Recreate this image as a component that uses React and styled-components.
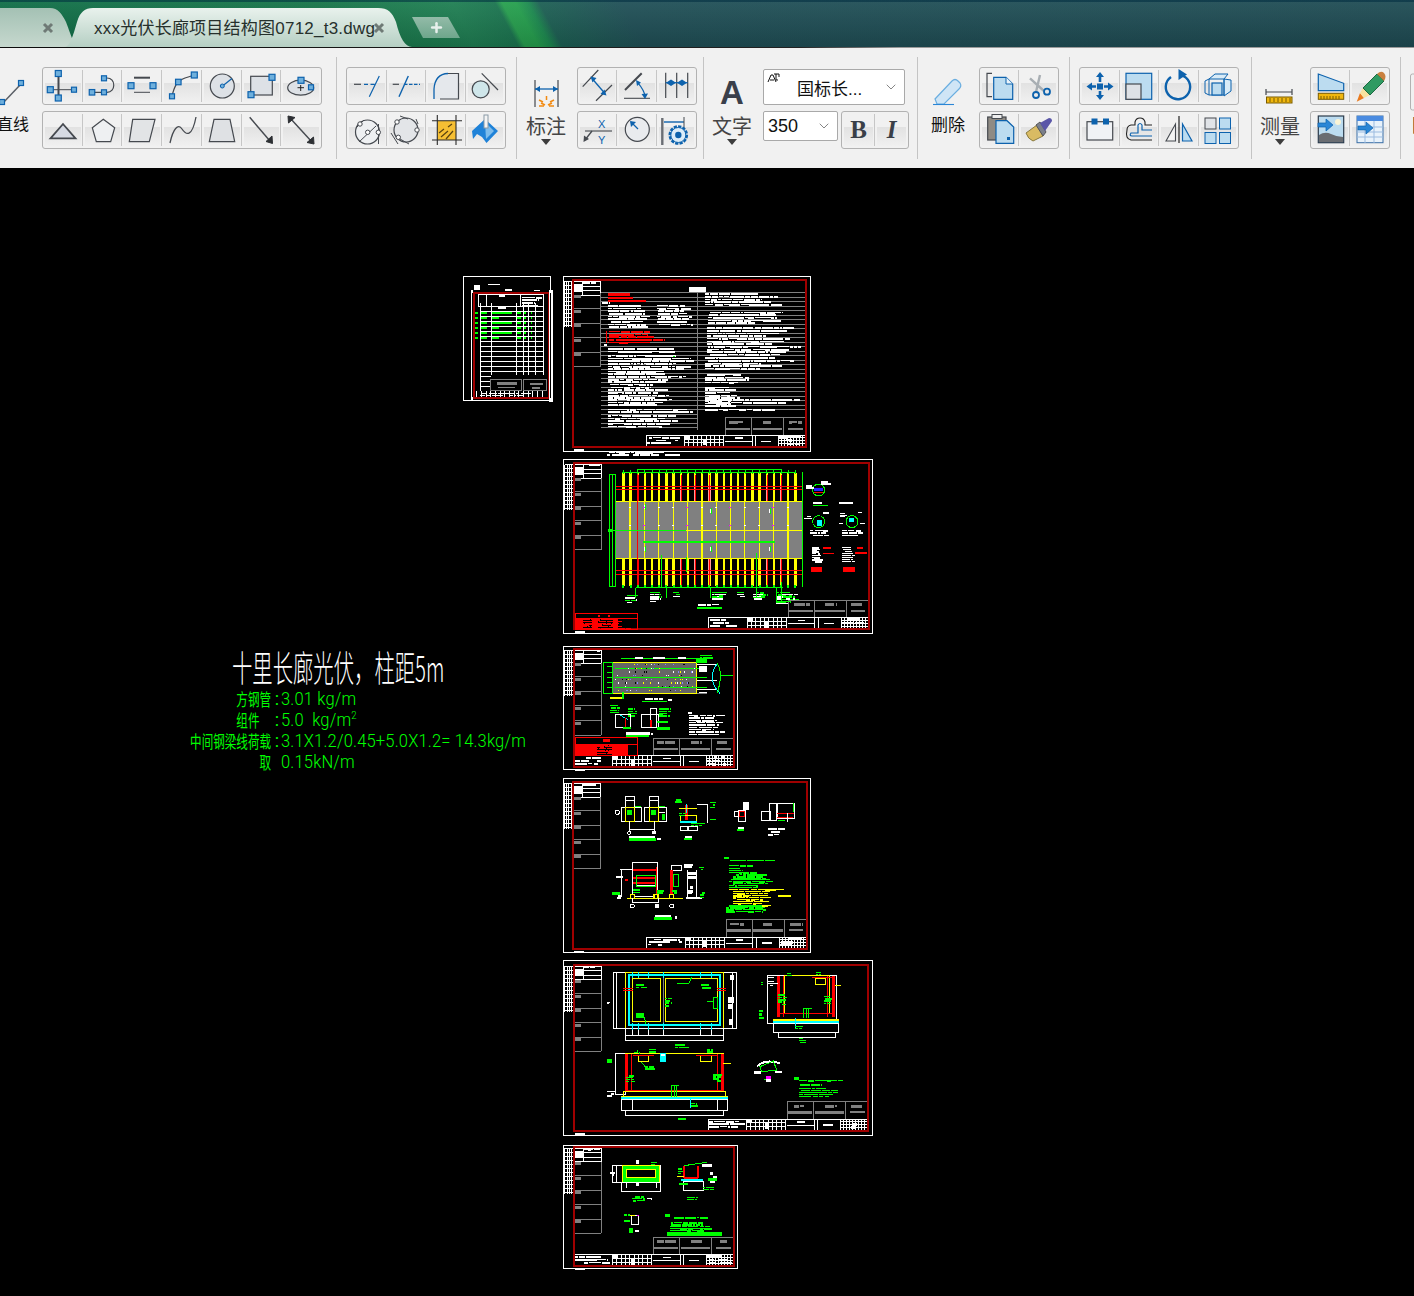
import React from 'react';
import styled, { createGlobalStyle } from 'styled-components';
import { ChevronDown, Plus } from 'lucide-react';

const Global = createGlobalStyle`
  html, body { margin: 0; padding: 0; background: #000; }
  body { font-family: "Noto Sans CJK SC", "Liberation Sans", sans-serif; }
`;
const Page = styled.div`width: 1414px; height: 1296px; overflow: hidden; display: flex; flex-direction: column;`;

/* ---------- tab bar ---------- */
const TabBar = styled.div`
  height: 47px; flex: none; position: relative; display: flex; align-items: flex-end;
  background:
    linear-gradient(180deg, rgba(8,50,70,.55) 0 2px, rgba(255,255,255,.05) 2px, rgba(0,0,0,.14) 100%),
    linear-gradient(62deg, #0f6d47 0, #167548 300px, #1f7f53 420px, #1b7550 458px, #27a04f 464px, #25a04e 476px, #1c8a50 487px, #1d6054 497px, #205057 570px, #1f4c54 100%);
`;
const TabShape = styled.div`
  position: relative; height: 39px; flex: none; box-sizing: border-box;
  width: ${p => p.$w}px; margin-left: ${p => p.$ml || 0}px;
  background: linear-gradient(180deg, ${p => p.$top}, ${p => p.$bottom});
  clip-path: path('${p => p.$shape}');
  font: 17px/42px "Liberation Sans", "Noto Sans CJK SC", sans-serif;
  letter-spacing: .23px; color: #26302c; white-space: nowrap;
  padding-left: ${p => p.$pl || 0}px;
`;
const CloseMark = styled.svg`position: absolute; left: ${p => p.$x}px; top: 14px; width: 12px; height: 12px;`;
const NewTab = styled.div`
  width: 48px; height: 21px; margin: 0 0 9px 0; flex: none; display: flex; align-items: center; justify-content: center; color: #e8f0ec;
  background: linear-gradient(180deg, #93bba8, #6ea68c);
  clip-path: polygon(0 0, 36px 0, 48px 21px, 11px 21px);
`;

/* ---------- ribbon ---------- */
const Ribbon = styled.div`
  flex: none; display: flex; align-items: flex-start; background: #f1f1f1; padding-top: 9px; height: 111px;
  border-top: 1px solid #000; border-image: linear-gradient(90deg, #0c0c0c, #222 800px, #9a9a9a 900px) 1;
`;
const Section = styled.div`
  display: flex; flex: none; height: 102px; box-sizing: border-box; padding: 10px ${p => p.$pr}px 0 ${p => p.$pl}px;
  gap: ${p => p.$gap || 0}px; border-right: ${p => (p.$last ? 0 : '1px solid #c4c4c4')};
  margin-left: ${p => p.$ml || 0}px;
`;
const Stack = styled.div`display: flex; flex-direction: column; gap: 6px; flex: none;`;
const Group = styled.div`
  display: flex; box-sizing: border-box; width: ${p => p.$w}px; height: 38px; padding: 2px 0;
  border: 1px solid #b2b2b2; border-radius: 3px; background: #f1f1f1;
`;
const Cell = styled.div`
  flex: 1 1 0; min-width: 0; box-sizing: border-box; display: flex; align-items: center; justify-content: center; position: relative;
  border: solid transparent; border-width: 0 2px; background-clip: padding-box;
  background-image: linear-gradient(180deg, #f1f1f1 0 40%, #e2e2e2 42%, #f0f0f0 100%);
  &:not(:last-child)::after { content: ""; position: absolute; right: -2px; top: 0; bottom: 0; width: 1px; background: #c6c6c6; }
`;
const IconSvg = styled.svg`width: 40px; height: 38px; flex: none; overflow: visible;`;
const Big = styled.div`display: flex; flex-direction: column; align-items: center; width: ${p => p.$w}px; flex: none;`;
const BigIcon = styled.svg`width: ${p => p.$w}px; height: 40px; flex: none; overflow: visible;`;
const BigLabel = styled.div`
  font-size: ${p => p.$size || 20}px; line-height: 24px; margin-top: ${p => p.$mt || 7}px; color: ${p => p.$color || '#454545'}; white-space: nowrap;
`;
const Caret = styled.div`width: 0; height: 0; margin-top: 1px; border: 5px solid transparent; border-top: 6px solid #3d3d3d; border-bottom: 0;`;
const TextCol = styled.div`display: flex; flex-direction: column; gap: 6px; flex: none; width: 146px; padding-top: 2px;`;
const SelectBox = styled.div`
  box-sizing: border-box; display: flex; align-items: center; position: relative; background: #fff; color: #111;
  width: ${p => p.$w}px; height: ${p => p.$h}px; padding-left: ${p => p.$pl}px; border: 1px solid #a9a9a9; border-radius: 2px;
  font: ${p => p.$size}px "Liberation Sans", "Noto Sans CJK SC", sans-serif;
`;
const SelectChevron = styled(ChevronDown)`position: absolute; right: ${p => p.$r}px; top: 50%; margin-top: -8px; color: #666;`;
const FontGlyph = styled.svg`position: absolute; left: 3px; top: 2px; width: 14px; height: 14px;`;
const Row = styled.div`display: flex; gap: 3px; align-items: flex-start;`;
const StyleLetter = styled.span`
  font: ${p => (p.$italic ? 'italic bold' : 'bold')} 25px "Liberation Serif", serif; color: #3a3f48;
`;

/* ---------- canvas ---------- */
const Canvas = styled.div`flex: 1; background: #000; position: relative;`;
const CadSvg = styled.svg`display: block; width: 1414px; height: 1128px;`;
const BigNote = styled.div`
  position: absolute; left: 232px; top: 474px; color: #fff; white-space: nowrap; transform: scaleX(.565); transform-origin: left top;
  font: 300 36px/48px "Noto Sans CJK SC", sans-serif;
`;
const Notes = styled.div`
  position: absolute; left: 189px; top: 520px; display: grid; grid-template-columns: 82px 10px auto; grid-auto-rows: 21px; align-items: center; color: #0f0;
`;
const NoteLabel = styled.div`
  white-space: pre; text-align: right; font: 400 17px/21px "Noto Sans CJK SC", sans-serif; transform: scaleX(.68); transform-origin: right center; justify-self: end;
`;
const NoteColon = styled.div`font: 400 18px/21px Roboto, sans-serif; text-align: center; padding-left: 2px;`;
const NoteValue = styled.div`
  white-space: pre; font: 300 19px/21px Roboto, "Liberation Sans", sans-serif; letter-spacing: .2px;
  transform: scaleX(.87); transform-origin: left center;
  sup { font-size: 11px; line-height: 0; }
`;

/* ---------- icons ---------- */
const DK = '#45494f', BL = '#0d62ad', LB = '#6fb0dc', FL = '#dde1e6', SK = '#bcdcf0';
const H = ({ x, y, s = 6 }) => <rect x={x - s / 2} y={y - s / 2} width={s} height={s} fill={LB} stroke={BL} strokeWidth="1.2" />;
const O = ({ x, y }) => <circle cx={x} cy={y} r="2.2" fill="#fff" stroke={DK} />;
const ICONS = {
  cross: <><path d="M15.5 7V31" stroke={DK} strokeWidth="2" /><path d="M7 22.7H31" stroke={DK} /><H x={15.3} y={6.5} /><H x={15.3} y={31} /><H x={7.3} y={22.7} /><H x={31} y={22.7} s={5} /></>,
  hook: <><path d="M9 25.3H21M24 11C33 11 33 25.3 24 25.3" fill="none" stroke={DK} strokeWidth="1.2" /><H x={21} y={11.3} s={5} /><H x={9} y={25.3} s={5.5} /><H x={21} y={25.3} s={5} /></>,
  bars: <><path d="M12 10.7H28" stroke={DK} strokeWidth="2" /><path d="M12 25.3H28" stroke={DK} /><H x={9} y={18.7} /><H x={31} y={18.7} /></>,
  arc: <><path d="M10 29C12 21 14 14 23 11S30 9 32 8" fill="none" stroke={DK} strokeWidth="1.2" /><H x={10} y={29.3} s={5} /><H x={16.3} y={15} s={5.5} /><H x={32.3} y={8} /></>,
  radius: <><circle cx="20.3" cy="19" r="12" fill={FL} stroke={DK} strokeWidth="1.2" /><path d="M20.5 19L30 11.5" stroke={BL} strokeWidth="1.2" /><circle cx="20.3" cy="19" r="2" fill={LB} stroke={BL} /></>,
  square: <><rect x="9.7" y="9.3" width="21.6" height="18.7" fill={FL} stroke={DK} strokeWidth="1.2" /><H x={31} y={10.3} /><H x={10} y={27.7} /></>,
  ellipse: <><ellipse cx="19.7" cy="20.7" rx="13" ry="7.5" fill={FL} stroke={DK} strokeWidth="1.2" /><path d="M16.5 20.7H23M19.7 18V24" stroke="#222" /><H x={20} y={13.3} /><H x={30} y={20.3} s={5} /></>,
  tri: <path d="M7.5 27.3L20 13L32.5 27.3Z" fill="#d6dae3" stroke={DK} strokeWidth="1.8" />,
  pent: <path d="M20.3 8.3L31.7 16.7L27.7 30.7H13.3L9.3 16.7Z" fill="#eef0f2" stroke={DK} strokeWidth="1.2" />,
  para: <path d="M10.7 8.3H33L27.3 30.7H7.3Z" fill="#e2e4e6" stroke={DK} strokeWidth="1.2" />,
  spline: <path d="M8 32C11 18 16 12 20 18S30 27 34 6" fill="none" stroke={DK} strokeWidth="1.3" />,
  trap: <path d="M12 8.3H28L32.7 30.7H7.3Z" fill="#dfe1e4" stroke={DK} strokeWidth="1.2" />,
  arrow: <><path d="M8.7 6.3L29 30" stroke={DK} strokeWidth="1.4" /><path d="M31.5 32.5L31 25L25 30.5Z" fill="#2c2f33" stroke="#2c2f33" /></>,
  arrows: <><path d="M9 7L31 31" stroke={DK} strokeWidth="1.4" /><path d="M33 33L32.5 26L26 31.5Z" fill="#2c2f33" stroke="#2c2f33" /><path d="M7 5L7.5 12L14 6.5Z" fill="#2c2f33" stroke="#2c2f33" /></>,
  dash1: <><path d="M7 17.3H14" stroke={DK} strokeWidth="1.2" /><path d="M17 17.3H21M23.5 17.3H27.5M32.3 9L22.3 29.7" stroke={BL} strokeWidth="1.2" /></>,
  dash2: <><path d="M6.7 17.3H13" stroke={DK} strokeWidth="1.2" /><path d="M22.3 9L13 29.7" stroke={BL} strokeWidth="1.4" /><path d="M18 17.3H34" stroke={BL} strokeDasharray="3.5 1.5" strokeWidth="1.2" /></>,
  fillet: <><path d="M7.5 22Q8 7 22 6.5H32.5V32H7.5Z" fill="#e5e8ec" /><path d="M22 6.5H32.5V32H14" fill="none" stroke={DK} strokeWidth="1.2" /><path d="M8 32V22Q9 7 22 6.5" fill="none" stroke={BL} strokeWidth="1.3" /></>,
  tangent: <><circle cx="15.7" cy="22.3" r="8.5" fill="#cfe6ea" stroke={DK} strokeWidth="1.2" /><path d="M16.7 6.3L33 23" stroke={DK} strokeWidth="1.2" /></>,
  c3p: <><circle cx="20.5" cy="21" r="12" fill="#eef0f2" stroke={DK} strokeWidth="1.2" /><path d="M9 17L17 9M12 31L29 15M31.5 13V33" stroke={DK} /><O x={13} y={13} /><O x={20.7} y={21.3} /><O x={31.3} y={21.3} /></>,
  c2p: <><circle cx="20" cy="19" r="12" fill="#e3e5e8" stroke={DK} strokeWidth="1.2" /><path d="M14 5L22 8M30 8L32 13M5 22L12 33M14 28L23 33" stroke={DK} /><O x={11} y={11} /><O x={31} y={19} /><O x={12.3} y={26.3} /></>,
  hatch: <><rect x="11.3" y="9.7" width="18.7" height="19.3" fill="#f6bf33" /><path d="M6 9.7H36M6 29H36M11.3 4V34M30 4V34" stroke="#2b2b2b" strokeWidth="1.1" /><path d="M13 22L18 18M15 26L22 20M20 28L27 20M22 16L26 13" stroke="#5b4310" strokeWidth="1.2" /></>,
  fill: <><path d="M7 20L20 8L33 20L21.5 32L17 26L12 23L8 28Z" fill="#1f82d8" /><path d="M20 11L29 20L21 28Z" fill="#7dbcec" /><rect x="19" y="4" width="4" height="13" fill="#f4f4f4" stroke="#8a9aa6" /></>,
  dimAligned: <><path d="M4.7 19.7L20.3 3M18 33.7L34 18" stroke={DK} strokeWidth="1.2" /><path d="M14.7 12.3L26.3 25.7" stroke={BL} strokeWidth="1.3" /><path d="M12.5 9.5L18.5 11L14.5 15.5ZM28.5 28.5L22.5 27L26.5 22.5Z" fill={BL} /></>,
  dimAngle: <><path d="M8 23L24.7 6.3" stroke={DK} strokeWidth="2" /><path d="M7 31.3H33" stroke={DK} strokeWidth="1.1" /><path d="M21.3 16.3Q27 23 28 29" fill="none" stroke={BL} strokeWidth="1.2" /><path d="M19 13L24 15.5L20 19ZM28 32L24.5 27L31 26.5Z" fill={BL} /></>,
  dimCont: <><path d="M9.7 5.7V31M20.7 5.7V31M31.7 5.7V31" stroke={DK} strokeWidth="1.2" /><path d="M9.7 15.7H31.7" stroke={BL} strokeWidth="1.2" /><path d="M10 15.7L15 12.5V19ZM20 15.7L15 12.5V19ZM21 15.7L26 12.5V19ZM31 15.7L26 12.5V19Z" fill={BL} /></>,
  xy: <><path d="M7 20H34" stroke={DK} strokeWidth="1.1" /><text x="23.7" y="17" textAnchor="middle" fontSize="11" fontFamily="Liberation Sans" fill={BL}>X</text><text x="23.7" y="33" textAnchor="middle" fontSize="11" fontFamily="Liberation Sans" fill={BL}>Y</text><path d="M14 20L7 29" stroke={DK} strokeWidth="1.3" /><path d="M5.5 31L6 24.5L11 28Z" fill={DK} /></>,
  dimRadius: <><circle cx="20.3" cy="18.3" r="12" fill="#e9ebee" stroke={DK} strokeWidth="1.2" /><path d="M21 18L14 11" stroke={BL} strokeWidth="1.3" /><path d="M13 10L19 11L14 16Z" fill={BL} /></>,
  dimGear: <><path d="M6.3 7V34" stroke="#6a6e74" strokeWidth="2.4" /><path d="M8 11H28" stroke={BL} strokeWidth="1.4" /><path d="M28 6V18" stroke={DK} /><circle cx="22.3" cy="24" r="8.5" fill="#cfe6f7" stroke={BL} strokeWidth="2.6" strokeDasharray="3.2 1.2" /><circle cx="22.3" cy="24" r="7.5" fill="#dcedf9" stroke={BL} /><circle cx="22.3" cy="24" r="3.2" fill={BL} /></>,
  copy: <><path d="M12 6.3H7V29.7H12" fill="none" stroke={DK} strokeWidth="1.2" /><path d="M13.7 10.3H26L32.7 17V32.3H13.7Z" fill={SK} stroke={BL} strokeWidth="1.2" /><path d="M26 10.3V17H32.7" fill="#eaf4fb" stroke={BL} /></>,
  cut: <><path d="M11 11.3L25 24M21 8L17 25" stroke="#a8aeb3" strokeWidth="2.4" /><circle cx="17" cy="28" r="3" fill="none" stroke={BL} strokeWidth="1.8" /><circle cx="28" cy="24.7" r="3" fill="none" stroke={BL} strokeWidth="1.8" /></>,
  paste: <><rect x="7.7" y="6" width="18.3" height="23" fill="#8f8b84" stroke={DK} strokeWidth="1.2" /><rect x="12" y="3.5" width="10" height="4" fill="#eee" stroke={DK} /><path d="M16 9.7H27L33.7 16V32.3H16Z" fill={SK} stroke={BL} strokeWidth="1.2" /><rect x="27" y="26" width="3" height="3" fill={BL} /></>,
  brush: <><path d="M7 22L18 14L24 25L14 30Q9 28 7 22Z" fill="#d9bb63" stroke="#8a7a3f" /><path d="M17 14L21 11L27 21L24 25Z" fill="#7b7f8a" stroke="#555" /><path d="M21 12L30 7Q33 7 33 10L26 20Z" fill="#5a56a8" /></>,
  move: <><rect x="17" y="16.5" width="6" height="6" fill={BL} /><path d="M20 5L24 10H21.3V15H18.7V10H16ZM20 33L24 28H21.3V24H18.7V28H16ZM6.5 19.5L12 15.5V18.2H16V20.8H12V23.5ZM33.5 19.5L28 15.5V18.2H24V20.8H28V23.5Z" fill={BL} /></>,
  scale: <><rect x="7" y="6.3" width="25.7" height="26" fill={SK} stroke={BL} strokeWidth="1.2" /><rect x="7" y="17" width="15" height="15.3" fill={FL} stroke={DK} strokeWidth="1.2" /></>,
  rotate: <><path d="M22 8.2A12.2 12.2 0 1 1 12 10" fill="none" stroke={BL} strokeWidth="2.4" /><path d="M19.5 2V13L28 7.5Z" fill={BL} /></>,
  cube: <><path d="M11 12L17 7H30L26 12ZM26 12L33 13V24L26 29Z" fill="#d9ebf7" stroke={BL} /><path d="M7 14L11 12V28L7 26ZM11 28H26V12" fill="none" stroke={BL} /><rect x="14" y="16" width="10" height="12" fill={SK} stroke={BL} strokeWidth="1.2" /></>,
  trim: <><rect x="7" y="10.7" width="25.7" height="18.3" fill="#f0f2f5" stroke={DK} strokeWidth="1.2" /><rect x="11.5" y="7.5" width="6" height="6" fill={BL} /><rect x="23" y="7.5" width="6" height="6" fill={BL} /></>,
  offset: <><path d="M33 14H26V11Q25 7 21 7T16 11V14H12Q8 15 8 19Q6 28 12 29H33" fill="none" stroke="#222" strokeWidth="1.1" /><path d="M33 19H23V14Q21 11 19 14V22H12Q10 25 13 25H33" fill="none" stroke={BL} strokeWidth="1.2" /></>,
  mirror: <><path d="M20 5V32" stroke="#222" strokeWidth="1.2" /><path d="M16.5 13V30H7Z" fill="#f3f3f3" stroke={DK} strokeWidth="1.1" /><path d="M23.5 13V30H33Z" fill={SK} stroke={BL} strokeWidth="1.2" /></>,
  array: <><rect x="7" y="7" width="11" height="11" fill="#e0e3e7" stroke={DK} /><rect x="21.5" y="7" width="11" height="11" fill={SK} stroke={BL} /><rect x="7" y="21.5" width="11" height="11" fill={SK} stroke={BL} /><rect x="21.5" y="21.5" width="11" height="11" fill={SK} stroke={BL} /></>,
  slope: <><path d="M7.3 7L32.7 16.3V23.7H7.3Z" fill={SK} stroke={BL} strokeWidth="1.2" /><rect x="7.3" y="26.3" width="25.4" height="6" fill="#f1b70e" stroke="#7a5c00" /><path d="M10 29V32M13 29V32M16 29V32M19 29V32M22 29V32M25 29V32M28 29V32" stroke="#7a5c00" /></>,
  pencil: <><path d="M6.7 34.7L10 26L14 31Z" fill="#e97a1e" /><path d="M10 26L13 21L20 28L14 31Z" fill="#f7e2a0" /><path d="M13 21L27 7L34 14L20 28Z" fill="#2f9a62" stroke="#1c6a41" /><path d="M27 7Q31 3 34 6T34 14Z" fill="#c9803f" /></>,
  image: <><rect x="7.3" y="5" width="25.4" height="26.7" fill={SK} stroke="#2b3a4a" strokeWidth="1.2" /><path d="M8 31V24Q14 20 20 23T32 26V31Z" fill="#6a6d72" /><circle cx="27" cy="11" r="3" fill="#fbf4d5" /><path d="M7 12H15V8L22 14L15 20V16H7Z" fill="#2a86d6" stroke={BL} strokeWidth=".7" /></>,
  table: <><rect x="7" y="5" width="26" height="26.7" fill="#e8f2fb" stroke="#3a6ea5" /><rect x="7" y="5" width="26" height="5" fill="#4a8be0" /><path d="M7 16H33M7 21H33M7 26H33M15 10V32M24 10V32" stroke="#9bbbe0" /><path d="M8 15H16V11L23 17L16 23V19H8Z" fill="#2a86d6" stroke={BL} strokeWidth=".7" /></>,
};
const Btn = ({ k }) => <Cell><IconSvg viewBox="0 0 40 38" fill="none">{ICONS[k]}</IconSvg></Cell>;
const BtnGroup = ({ w, items }) => <Group $w={w}>{items.map(k => <Btn key={k} k={k} />)}</Group>;

/* ---------- CAD generator ---------- */
const rng = seed => { let s = seed * 9301 + 49297; return () => (s = (s * 9301 + 49297) % 233280) / 233280; };
const W = '#fff', G = '#0f0', Y = '#ff0', R = '#f00', D = '#a00000', C = '#0ff', A = '#808080', P = '#ff9a9a';
const L = (c, x1, y1, x2, y2, w = 3) => ({ t: 'l', c, x1, y1, x2, y2, w });
const RO = (c, x1, y1, x2, y2, w = 3) => ({ t: 'o', c, x1, y1, x2, y2, w });
const RF = (c, x1, y1, x2, y2) => ({ t: 'f', c, x1, y1, x2, y2 });
const CI = (c, x, y, r, w = 3) => ({ t: 'c', c, x, y, r, w });
let seedCounter = 1;
const N = (c, x, y, w, h, rowH = 12, dens = .85) => {
  const r = rng(seedCounter++); let d = '';
  for (let yy = y; yy < y + h; yy += rowH) {
    const rowEnd = x + w * (.6 + r() * .4);
    let xx = x + (r() < .2 ? r() * 12 : 0);
    while (xx < rowEnd) {
      const len = 6 + r() * 30;
      if (r() < dens) { const bh = Math.round(rowH * (.5 + r() * .3)); d += `M${Math.round(xx)} ${yy}h${Math.round(Math.min(len, rowEnd - xx))}v${bh}h-${Math.round(Math.min(len, rowEnd - xx))}z`; }
      xx += len + r() * 4;
    }
  }
  return { t: 'p', c, d };
};
const frame = (ox1, oy1, ox2, oy2, rx1, ry1, rx2, ry2) => {
  const out = [RO(W, ox1, oy1, ox2, oy2)];
  const sx = rx1 - 28;
  for (let x = sx; x <= rx1; x += 7) out.push(L(W, x, ry1 + 4, x, ry1 + 141, 3));
  for (let y = ry1 + 4; y <= ry1 + 141; y += 12) out.push(L(W, sx, y, rx1, y, 3));
  out.push(RO(W, rx1, ry1 + 4, rx1 + 82, ry1 + 44));
  out.push(L(W, rx1 + 28, ry1 + 17, rx1 + 82, ry1 + 17), L(W, rx1 + 28, ry1 + 30, rx1 + 82, ry1 + 30), L(W, rx1 + 28, ry1 + 4, rx1 + 28, ry1 + 44));
  out.push(RF(W, rx1 + 3, ry1 + 12, rx1 + 27, ry1 + 34), N(W, rx1 + 30, ry1 + 5, 50, 8, 8));
  [84, 129, 171, 216, 259].forEach(dy => {
    out.push(L(A, rx1, ry1 + dy, rx1 + 82, ry1 + dy), RF(A, rx1 + 2, ry1 + dy - 40, rx1 + 22, ry1 + dy - 31));
  });
  out.push(L(A, rx1 + 82, ry1 + 44, rx1 + 82, ry1 + 259), L(A, rx1, ry1 + 44, rx1, ry1 + 259));
  const tx = rx2 - 480, ty = ry2 - 35;
  out.push(RO(A, rx2 - 242, ry2 - 88, rx2, ty), L(A, rx2 - 164, ry2 - 88, rx2 - 164, ty), L(A, rx2 - 68, ry2 - 88, rx2 - 68, ty));
  out.push(N(A, rx2 - 230, ry2 - 78, 60, 12, 12, 1), N(A, rx2 - 130, ry2 - 78, 40, 12, 12, 1), N(A, rx2 - 52, ry2 - 78, 42, 12, 12, 1));
  out.push(RF(A, rx2 - 240, ry2 - 58, rx2 - 168, ry2 - 51), RF(A, rx2 - 160, ry2 - 58, rx2 - 72, ry2 - 51), RF(A, rx2 - 54, ry2 - 58, rx2 - 10, ry2 - 52));
  out.push(RO(W, tx, ty, rx2, ry2), N(W, tx + 4, ty + 5, 110, 24, 8));
  for (let x = tx + 115; x < tx + 235; x += 13) out.push(L(W, x, ty, x, ry2, 3));
  out.push(L(W, tx + 115, ty + 11, tx + 235, ty + 11, 3), L(W, tx + 115, ty + 22, tx + 235, ty + 22, 3));
  out.push(RF(W, tx + 118, ty + 2, tx + 132, ty + 10), RF(W, tx + 170, ty + 12, tx + 182, ty + 30));
  out.push(L(W, tx + 238, ty + 18, tx + 318, ty + 18), L(W, tx + 318, ty, tx + 318, ry2), L(W, tx + 328, ty, tx + 328, ry2), RF(W, tx + 268, ty + 6, tx + 290, ty + 11), RF(W, tx + 345, ty + 16, tx + 375, ty + 20));
  for (let x = rx2 - 82; x < rx2; x += 9) out.push(L(W, x, ty, x, ry2, 3));
  for (let y = ty + 7; y < ry2; y += 9) out.push(L(W, rx2 - 82, y, rx2, y, 3));
  out.push(N(W, rx2 - 80, ty + 2, 78, 30, 10, .5));
  out.push(RO(D, rx1, ry1, rx2, ry2, 6));
  out.push(RF(W, rx1 + 2, ry2 + 6, rx1 + 32, ry2 + 12));
  return out;
};

const sheet0 = () => {
  const o = [RO(W, 10, 19, 272, 391, 3)];
  for (let y = 110; y <= 360; y += 15) o.push(L(W, 60, y, 252, y, 3));
  [60, 95, 170, 190, 205, 225, 250].forEach(x => o.push(L(W, x, 100, x, 362, 3)));
  o.push(RO(W, 55, 72, 250, 110), L(W, 80, 72, 80, 110), L(W, 180, 72, 180, 110));
  o.push(N(W, 85, 42, 45, 8, 8, 1), RF(W, 42, 46, 60, 60), N(W, 132, 58, 30, 8, 8), N(W, 222, 60, 32, 6, 6), N(W, 118, 76, 28, 8, 8, 1), N(W, 185, 80, 62, 28, 8, 1), N(W, 115, 112, 25, 6, 6, 1));
  for (let y = 125; y <= 205; y += 15) {
    o.push(RF(G, 46, y, 54, y + 6), RF(G, 64, y, 82, y + 6), RF(G, 97, y, y % 2 ? 155 : 118, y + 7), RF(G, 172, y, 184, y + 6), RF(G, 192, y, 198, y + 6), RF(G, 212, y, 216, y + 6));
  }
  o.push(RF('#000', 92, 315, 262, 362), RO(A, 92, 328, 185, 360), RO(A, 190, 328, 260, 360), RF(A, 110, 335, 170, 345), RF(A, 115, 350, 165, 355), RF(A, 210, 338, 250, 345), RF(A, 215, 350, 240, 356));
  o.push(RO(D, 42, 70, 267, 385, 6));
  o.push(RF(W, 32, 60, 40, 390), RF('#000', 36, 70, 39, 380), RF(W, 268, 60, 278, 395), RF('#000', 270, 70, 274, 385));
  for (let x = 50; x < 260; x += 14) o.push(L(W, x, 364, x, 382, 3));
  o.push(N(W, 60, 368, 190, 12, 6, .6));
  return o;
};
const sheet1 = () => {
  const o = frame(310, 19, 1052, 545, 340, 31, 1038, 531);
  for (let y = 68; y < 480; y += 13.5) o.push(L(A, 422, y, 713, y, 3));
  for (let y = 68; y < 427; y += 13.5) o.push(L(A, 713, y, 1035, y, 3));
  o.push(L(A, 422, 68, 422, 290), L(A, 713, 68, 713, 480));
  [[445, 105, 130, 65], [590, 105, 120, 60], [735, 70, 250, 40], [745, 125, 230, 40], [740, 172, 290, 95], [445, 235, 240, 14], [445, 255, 265, 52], [445, 310, 240, 30], [445, 342, 210, 42], [445, 387, 200, 20], [445, 416, 260, 10], [445, 435, 240, 34], [735, 262, 270, 40], [735, 312, 150, 28], [735, 350, 110, 60], [735, 388, 290, 12], [735, 416, 230, 8], [425, 97, 30, 6], [425, 222, 20, 8]].forEach(b => o.push(N(W, ...b, 8, 1)));
  o.push(RF(R, 445, 70, 510, 77), RF(R, 445, 81, 520, 88), RF(R, 445, 91, 558, 97), N(R, 448, 183, 170, 36, 8, 1), RF(R, 438, 184, 441, 218));
  o.push(RF(W, 688, 51, 738, 65), N(W, 440, 546, 265, 14, 7, .9), RF(G, 640, 258, 645, 262));
  return o;
};
const sheet2 = () => {
  const o = frame(310, 568, 1238, 1090, 342, 580, 1226, 1078);
  o.push(RF(A, 465, 695, 1027, 865));
  for (let i = 0; i < 13; i++) { const x = 510 + i * 43; o.push(L(Y, x, 695, x, 865, [0, 5, 11].includes(i) ? 6 : 3)); }
  for (let i = 0; i < 25; i++) {
    const x = 490 + i * 21.5; const pink = [2, 8, 10, 12, 20, 22].includes(i);
    o.push(L(Y, x, 610, x, 695, 7), L(Y, x, 865, x, 948, 7));
    if (pink) o.push(L(P, x, 645, x, 695, 7), L(P, x, 865, x, 915, 7), L(R, x + 1, 615, x + 1, 695, 3), L(R, x + 1, 865, x + 1, 945, 3));
  }
  [695, 780, 865].forEach(y => o.push(L(Y, 465, y, 1027, y, 3)));
  [648, 658].forEach(y => o.push(L(R, 468, y, 1027, y, 3)));
  [902, 914].forEach(y => o.push(L(R, 468, y, 1027, y, 3)));
  o.push(L(G, 487, 607, 1008, 607, 3), L(G, 532, 598, 965, 598, 3), L(G, 527, 953, 970, 953, 4), L(G, 1027, 607, 1027, 950, 3), L(G, 550, 817, 945, 817, 6), L(R, 532, 610, 532, 945, 3));
  o.push(RO(G, 448, 612, 465, 948), L(G, 457, 612, 457, 948), L(G, 445, 780, 678, 780, 3), RF(G, 445, 776, 460, 786));
  for (let i = 0; i < 25; i++) { const x = 490 + i * 21.5; o.push(L(G, x, 600, x, 612), RF(G, x - 3, 945, x + 3, 953)); }
  [[557, 712], [557, 838], [755, 722], [755, 838], [932, 722], [932, 838]].forEach(([x, y]) => o.push(L(G, x, y - 9, x, y + 9, 4), L(W, x - 5, y - 6, x - 5, y + 6, 3)));
  for (let i = 0; i < 12; i++) { const x = 510 + i * 43; [712, 764].forEach(y => o.push(RF(i % 3 === 1 ? '#f0f' : W, x - 3, y, x + 3, y + 3))); }
  [[495, 975, 40, 18], [570, 965, 35, 22], [640, 965, 24, 8], [755, 965, 45, 18], [832, 965, 24, 8], [880, 965, 45, 18], [948, 965, 70, 32]].forEach(b => o.push(N(G, ...b, 7, 1), N(W, b[0], b[1] + 6, b[2], b[3], 7, .6)));
  [[527, 955, 527, 985], [618, 955, 618, 985], [680, 905, 680, 860], [605, 955, 605, 855], [889, 850, 889, 985], [750, 955, 750, 985], [965, 935, 965, 995], [948, 955, 948, 995]].forEach(a => o.push(L(G, ...a, 3)));
  o.push(N(W, 715, 1002, 70, 7, 7, 1), RF(G, 712, 1012, 785, 1016), N(W, 788, 1007, 12, 5, 5, 1));
  [[1076, 660, 18], [1076, 755, 18], [1176, 755, 18]].forEach(([x, y, r]) => o.push(CI(G, x, y, r)));
  o.push(RF('#22f', 1062, 655, 1090, 663), RF(R, 1063, 665, 1088, 668), RF(C, 1070, 750, 1085, 768), RF(C, 1168, 745, 1183, 755));
  o.push(N(W, 1082, 634, 30, 8, 6, 1), N(W, 1038, 646, 28, 8, 6, 1), N(W, 1060, 696, 45, 8, 8, 1), N(W, 1138, 696, 42, 8, 8, 1), RF(G, 1060, 704, 1105, 707));
  o.push(N(W, 1032, 738, 25, 8, 6, 1), N(W, 1090, 727, 20, 6, 6, 1), N(W, 1140, 730, 25, 8, 6, 1), N(W, 1195, 727, 15, 6, 6, 1), N(W, 1138, 758, 20, 6, 6, 1), N(W, 1190, 758, 25, 6, 6, 1), N(W, 1050, 780, 60, 15, 7, 1), N(W, 1145, 780, 70, 15, 7, 1));
  o.push(N(W, 1055, 832, 35, 48, 6, 1), N(W, 1145, 830, 40, 48, 6, 1), RF(R, 1090, 830, 1112, 836), RF(R, 1090, 848, 1122, 852), RF(R, 1190, 830, 1210, 836), RF(R, 1185, 846, 1222, 852), RF(R, 1052, 892, 1086, 905), RF(R, 1150, 892, 1185, 905));
  o.push(RO(R, 345, 1030, 533, 1078), L(R, 345, 1046, 533, 1046));
  o.push(N(R, 348, 1048, 180, 28, 5, 1), RF(R, 345, 1048, 368, 1076), RF(R, 395, 1048, 415, 1076), RF(R, 458, 1048, 475, 1076), RF(R, 415, 1035, 420, 1042), RF(R, 445, 1035, 450, 1042));
  return o;
};
const sheet3 = () => {
  const o = frame(10, 19, 533, 388, 42, 26, 522, 382);
  o.push(RF('#666', 160, 68, 410, 160), RO(Y, 157, 67, 410, 160, 3), RO(G, 130, 67, 157, 160));
  [80, 98, 112, 128, 142].forEach(y => { o.push(L(G, 142, y, 157, y)); });
  [84, 112, 142].forEach(y => o.push(L(G, 165, y, 440, y, 3)));
  const r = rng(5);
  for (let i = 0; i < 90; i++) { const x = 165 + r() * 240, y = 72 + Math.floor(r() * 8) * 11; o.push(RF([W, Y, '#000', '#88f'][i % 4], x, y, x + 3, y + 4)); }
  o.push(L(G, 182, 55, 408, 55, 3), N(W, 200, 52, 190, 8, 8, .6), RF(G, 408, 55, 440, 68), N(G, 420, 46, 40, 10, 6, 1), RF(Y, 150, 170, 190, 176), RF(G, 187, 156, 192, 176));
  o.push(N(W, 245, 175, 75, 8, 8, 1), L(G, 245, 185, 320, 185), RF(W, 325, 177, 335, 183));
  [[72, 97], [120, 128], [148, 160]].forEach(([a, b]) => o.push(L(W, 410, a, 470, a, 3), RF(W, 417, a + 8, 440, b - 2)));
  o.push(RF(W, 417, 78, 440, 90), { t: 'a', c: C, d: 'M475 68C450 95 450 130 480 160', w: 3 }, { t: 'a', c: G, d: 'M470 68C490 95 480 130 472 160', w: 3 }, L(G, 480, 106, 520, 106, 4), RF(A, 410, 158, 440, 161));
  o.push(N(G, 150, 195, 30, 22, 7, 1), N(G, 203, 205, 30, 24, 7, 1), RO(W, 165, 222, 212, 263), L(C, 180, 225, 205, 240), L(R, 195, 235, 195, 265, 3), N(G, 190, 262, 35, 8, 8, 1));
  o.push(RO(W, 243, 222, 295, 263), RO(W, 270, 205, 288, 263), L(R, 272, 240, 272, 262, 5), N(G, 298, 205, 35, 22, 7, 1), RF(G, 290, 242, 325, 250), RF(G, 290, 262, 330, 270));
  o.push(RF(W, 198, 276, 270, 284), RF(G, 198, 284, 268, 290), RF(W, 272, 280, 280, 286));
  o.push(N(W, 388, 225, 118, 60, 7, 1), RF(W, 385, 216, 395, 222));
  o.push(RO(R, 45, 292, 232, 347), L(R, 45, 312, 232, 312), N(R, 48, 314, 182, 32, 5, 1), RF(R, 45, 314, 110, 347), RF(R, 155, 314, 205, 347), RF(R, 130, 297, 150, 305));
  return o;
};
const sheet4 = () => {
  const o = frame(10, 415, 752, 938, 40, 427, 740, 926);
  [[183, 195, 222], [253, 267, 296]].forEach(([a, b, c]) => {
    o.push(RO(W, a, 502, c + 22, 543), RO(W, b, 470, c + 0, 543), RO(Y, b, 502, c, 543), RF(G, b + 7, 510, b + 21, 525), L(W, b, 480, c, 480));
  });
  o.push(L(W, 208, 543, 208, 575), L(W, 282, 543, 282, 575), L(W, 208, 568, 282, 568), CI(W, 208, 578, 5), RF(W, 277, 573, 287, 583), CI(W, 172, 517, 6), N(G, 226, 497, 22, 6, 6, 1), N(G, 298, 497, 22, 6, 6, 1), RF(G, 306, 522, 314, 540), L(W, 296, 517, 316, 517));
  o.push(RF(W, 208, 588, 285, 595), RF(G, 207, 595, 288, 603), RF(W, 290, 595, 302, 600));
  o.push(N(G, 345, 477, 30, 14, 7, 1), RO(W, 360, 558, 413, 572), L(W, 412, 492, 445, 492), L(W, 443, 492, 443, 550), L(R, 380, 495, 380, 540, 8), L(C, 380, 492, 380, 520, 4), RO(Y, 362, 526, 408, 543), L(Y, 358, 505, 410, 505, 3), RF(C, 360, 544, 410, 550), N(G, 450, 486, 18, 18, 7, 1), N(G, 450, 536, 18, 6, 6, 1), N(G, 392, 548, 50, 12, 6, 1), N(G, 358, 518, 25, 8, 6, 1), RF(W, 380, 558, 386, 572));
  o.push(RF(G, 372, 595, 395, 600), N(W, 372, 588, 36, 8, 8, 1));
  o.push(RO(W, 522, 515, 537, 530), RO(W, 535, 510, 555, 543), RO(R, 538, 515, 553, 530), RF(W, 549, 487, 567, 510), RF(G, 531, 567, 552, 572), N(W, 533, 562, 34, 6, 6, 1));
  o.push(RO(W, 603, 515, 630, 540), RO(W, 628, 490, 648, 540), RO(W, 651, 490, 702, 535), L(G, 700, 490, 700, 515), L(R, 652, 520, 702, 520, 3), L(R, 652, 532, 700, 532, 3), L(W, 682, 520, 682, 545), N(W, 625, 565, 50, 24, 8, 1), RF(G, 655, 540, 675, 544));
  o.push(RO(W, 217, 667, 293, 770), L(W, 180, 688, 217, 688), L(W, 183, 688, 183, 770), RF(R, 220, 688, 288, 694), RF(R, 220, 712, 288, 718), RF(R, 220, 726, 288, 732), L(R, 290, 680, 290, 770, 3), RO(G, 228, 705, 285, 740), RF(W, 230, 735, 285, 738), RF(W, 168, 708, 190, 714), RF(G, 156, 756, 180, 764), RF(R, 196, 716, 205, 724), L(Y, 200, 775, 370, 775), RO(W, 216, 787, 295, 770), RF(W, 285, 792, 296, 804), CI(W, 217, 798, 6), N(G, 218, 748, 25, 14, 7, 1), N(G, 290, 750, 25, 12, 7, 1), N(W, 170, 765, 18, 10, 6, 1));
  o.push(RO(W, 333, 675, 364, 692), L(R, 334, 690, 334, 770, 8), RO(G, 340, 704, 356, 738), CI(W, 335, 798, 6), N(G, 335, 750, 22, 12, 7, 1), N(W, 372, 672, 40, 14, 7, 1), L(W, 382, 690, 382, 775), L(W, 410, 690, 410, 775), N(W, 385, 695, 22, 72, 14, .5), RF(W, 378, 770, 425, 776), N(G, 418, 680, 16, 8, 6, 1), N(G, 420, 756, 16, 16, 7, 1), RF(Y, 280, 763, 296, 775), RF('#000', 284, 766, 292, 773), RF(Y, 210, 763, 225, 775), RF('#000', 213, 766, 222, 773), RF(Y, 327, 763, 342, 775), RF('#000', 330, 766, 339, 773));
  o.push(RF(W, 285, 826, 333, 832), RF(G, 282, 832, 336, 840), RF(W, 345, 828, 351, 836));
  o.push(RF(G, 492, 650, 507, 658), N(G, 510, 659, 168, 6, 8, 1), N(G, 507, 675, 100, 8, 8, 1), N(G, 508, 683, 50, 16, 6, 1), N(G, 520, 697, 115, 20, 6, 1), N(G, 506, 717, 135, 30, 6, 1), N(Y, 507, 747, 188, 6, 6, 1), N(Y, 520, 753, 135, 44, 6, 1), RF(Y, 655, 765, 693, 771), RF(G, 506, 796, 605, 802), N(G, 498, 802, 158, 18, 6, 1));
  return o;
};
const sheet5 = () => {
  const o = frame(10, 16, 936, 542, 42, 30, 924, 527);
  o.push(RO(W, 160, 52, 530, 220), RO(Y, 197, 52, 490, 220), RO(C, 207, 60, 480, 210, 8), RO(Y, 217, 70, 302, 200), RO(Y, 316, 70, 472, 200), L(W, 170, 52, 170, 220), L(W, 516, 52, 516, 220), RO(W, 197, 220, 490, 257), L(W, 197, 240, 490, 240), L(A, 310, 52, 310, 240, 3), L(R, 190, 100, 220, 100), L(R, 190, 106, 220, 106), L(R, 470, 100, 497, 100), L(R, 470, 106, 497, 106));
  [217, 235, 265, 310, 420, 455].forEach(x => o.push(L(W, x, 220, x, 240), L(C, x, 205, x, 225, 3), L(C, x, 50, x, 70, 3)));
  o.push(N(G, 228, 88, 40, 10, 8, 1), N(G, 423, 88, 38, 10, 8, 1), RF(G, 228, 175, 252, 188), L(G, 352, 85, 388, 85), L(G, 388, 85, 395, 65), RO(G, 460, 127, 472, 160), L(G, 440, 138, 460, 138), N(G, 315, 128, 22, 28, 7, 1), L(G, 252, 185, 258, 207), N(W, 140, 140, 12, 10, 5, 1), N(W, 505, 60, 20, 140, 22, .4));
  o.push(RO(W, 622, 62, 830, 205), RO(Y, 672, 62, 808, 175), L(R, 656, 64, 656, 185, 8), L(R, 670, 64, 670, 185, 3), L(R, 803, 64, 803, 185, 3), L(R, 820, 64, 820, 185, 8), L(R, 656, 175, 820, 175, 5), RF(Y, 640, 192, 836, 200), RF(C, 640, 198, 836, 203), RO(W, 640, 205, 836, 233), RO(W, 655, 233, 825, 247), RO(Y, 767, 70, 797, 88), L(R, 755, 66, 820, 66), N(G, 655, 118, 28, 30, 7, 1), N(G, 792, 122, 28, 26, 7, 1), L(G, 730, 160, 730, 190), L(G, 738, 160, 738, 190), L(G, 745, 160, 745, 190), L(G, 730, 160, 755, 160), N(G, 680, 54, 18, 8, 6, 1), N(G, 768, 50, 20, 10, 6, 1), N(G, 597, 80, 14, 10, 6, 1), N(G, 598, 165, 14, 24, 10, 1), L(C, 706, 190, 706, 222), N(G, 706, 212, 30, 10, 6, 1), N(G, 717, 248, 24, 14, 6, 1), N(W, 625, 65, 30, 28, 6, .5), L(Y, 825, 92, 842, 92, 4));
  o.push(RO(W, 166, 295, 195, 418), RO(Y, 197, 295, 490, 410), L(R, 200, 296, 200, 410, 8), L(R, 215, 296, 215, 410, 3), L(R, 472, 296, 472, 410, 3), L(R, 487, 296, 487, 410, 8), L(R, 200, 406, 487, 406, 5), RO(Y, 190, 408, 497, 425), RF(C, 183, 426, 503, 433), RF(Y, 183, 423, 503, 426), RO(W, 183, 433, 503, 467), RO(W, 196, 467, 490, 480), L(W, 217, 433, 217, 467), L(W, 472, 433, 472, 467), RO(Y, 235, 302, 266, 320), RO(Y, 421, 302, 455, 320), L(R, 218, 300, 282, 300), L(R, 408, 300, 470, 300), RF(C, 300, 295, 318, 320), RF(W, 303, 298, 315, 304), N(G, 198, 360, 28, 20, 6, 1), N(G, 460, 358, 28, 22, 6, 1), N(G, 255, 333, 32, 14, 7, 1), L(G, 245, 322, 260, 340), L(G, 334, 392, 334, 425), L(G, 342, 392, 342, 425), L(G, 350, 392, 350, 425), L(G, 334, 392, 356, 392), L(C, 390, 428, 390, 458), N(G, 392, 444, 24, 14, 7, 1), RF(G, 355, 488, 378, 495), RF(G, 141, 312, 155, 324), N(G, 345, 268, 44, 14, 7, 1), N(G, 222, 286, 20, 8, 6, 1), N(G, 268, 282, 20, 10, 6, 1), N(G, 440, 283, 22, 10, 6, 1), N(W, 142, 400, 22, 22, 7, .6), L(Y, 490, 325, 512, 325, 3));
  o.push({ t: 'a', c: W, d: 'M590 335Q615 310 660 325', w: 6 }, { t: 'a', c: G, d: 'M600 335L640 318L650 345L605 350Z', w: 3 }, RF(W, 583, 349, 604, 356), RF(W, 645, 349, 665, 353), RF('#f0f', 618, 363, 633, 372), RF(W, 618, 372, 633, 381), RF(G, 612, 373, 618, 376));
  o.push(RF(G, 703, 367, 716, 376), N(G, 718, 375, 172, 6, 6, 1), N(G, 712, 388, 105, 8, 8, 1), N(G, 716, 398, 130, 30, 6, 1));
  return o;
};
const sheet6 = () => {
  const o = frame(10, 571, 533, 940, 42, 576, 522, 934);
  o.push(RO(W, 158, 630, 300, 683), RF(G, 188, 631, 299, 682), RO(Y, 188, 631, 299, 682), RF('#000', 200, 642, 287, 668), RO(Y, 199, 642, 287, 668), RO(W, 185, 682, 300, 710), L(W, 170, 630, 170, 683), N(W, 150, 650, 15, 14, 7, 1), RF(W, 228, 615, 236, 628), RF(W, 228, 684, 236, 692), N(G, 272, 622, 22, 10, 5, 1), L(W, 200, 682, 200, 700), L(W, 288, 682, 288, 700));
  o.push(N(G, 215, 724, 45, 14, 6, 1), N(W, 262, 728, 20, 8, 8, .7));
  o.push(L(R, 372, 632, 372, 670, 8), L(R, 414, 632, 414, 670, 8), L(R, 372, 668, 414, 668, 5), RF(C, 363, 671, 428, 678), RO(W, 370, 678, 430, 705), L(Y, 352, 664, 372, 664), N(G, 353, 640, 18, 20, 7, 1), N(G, 358, 685, 38, 8, 8, 1), L(G, 372, 632, 440, 622), N(W, 425, 628, 50, 60, 12, .6), N(G, 430, 695, 35, 10, 7, 1), N(G, 382, 725, 38, 12, 6, 1), N(G, 440, 656, 36, 24, 12, .7));
  o.push(RO(W, 214, 781, 234, 807), N(G, 193, 768, 18, 34, 9, .8), RF('#f0f', 232, 780, 236, 784), RF(Y, 210, 780, 224, 784), RF(G, 207, 820, 220, 834), RF(W, 226, 826, 236, 830));
  o.push(RF(G, 316, 777, 330, 785), N(G, 333, 786, 168, 8, 8, 1), N(G, 332, 800, 98, 10, 8, 1), N(G, 330, 812, 130, 18, 6, 1), RF(G, 322, 830, 486, 844), N(G, 360, 820, 110, 12, 6, 1));
  return o;
};

const CadItem = ({ i }) => {
  if (i.t === 'l') return <line x1={i.x1} y1={i.y1} x2={i.x2} y2={i.y2} stroke={i.c} strokeWidth={i.w} />;
  if (i.t === 'o') return <rect x={Math.min(i.x1, i.x2)} y={Math.min(i.y1, i.y2)} width={Math.abs(i.x2 - i.x1)} height={Math.abs(i.y2 - i.y1)} fill="none" stroke={i.c} strokeWidth={i.w} />;
  if (i.t === 'f') return <rect x={i.x1} y={i.y1} width={i.x2 - i.x1} height={i.y2 - i.y1} fill={i.c} />;
  if (i.t === 'c') return <circle cx={i.x} cy={i.y} r={i.r} fill="none" stroke={i.c} strokeWidth={i.w} />;
  if (i.t === 'a') return <path d={i.d} fill="none" stroke={i.c} strokeWidth={i.w} />;
  return <path d={i.d} fill={i.c} />;
};
const Cad = ({ ox, oy, items }) => (
  <g transform={`translate(${ox} ${oy}) scale(${1 / 3})`} shapeRendering="crispEdges">
    {items.map((i, n) => <CadItem key={n} i={i} />)}
  </g>
);
const SHEETS = [
  [460, 270, sheet0()], [460, 270, sheet1()], [460, 270, sheet2()],
  [560, 640, sheet3()], [560, 640, sheet4()],
  [560, 955, sheet5()], [560, 955, sheet6()],
];

const TAB_SHAPE = 'M0 39C5 38 8 28 12 14C15 4 20 0 28 0H313C323 0 327 4 331 14C335 30 340 39 347 39Z';
const SIDE_SHAPE = 'M0 0H50C58 0 62 6 66 14C70 24 74 39 78 39H0Z';
const X = ({ x }) => (
  <CloseMark $x={x} viewBox="0 0 12 12"><path d="M2 2L10 10M10 2L2 10" stroke="#6f7a76" strokeWidth="3" /></CloseMark>
);

export default function App() {
  return (
    <Page>
      <Global />
      <TabBar>
        <TabShape $w={78} $top="#a4c1b4" $bottom="#c6d8ce" $shape={SIDE_SHAPE}><X x={42} /></TabShape>
        <TabShape $w={347} $ml={-13} $pl={29} $top="#e9f2ed" $bottom="#b5cfc3" $shape={TAB_SHAPE}>
          xxx光伏长廊项目结构图0712_t3.dwg<X x={308} />
        </TabShape>
        <NewTab><Plus size={15} strokeWidth={4} /></NewTab>
      </TabBar>
      <Ribbon>
        <Section $pl={0} $pr={14} $gap={14} $ml={-2}>
          <Big $w={30}>
            <BigIcon $w={30} viewBox="0 0 30 40"><path d="M4 37L23 17" stroke="#5a5f66" strokeWidth="1.5" /><H x={4} y={35} s={5} /><H x={23} y={16} s={5} /></BigIcon>
            <BigLabel $size={16} $mt={4} $color="#111">直线</BigLabel>
          </Big>
          <Stack>
            <BtnGroup w={280} items={['cross', 'hook', 'bars', 'arc', 'radius', 'square', 'ellipse']} />
            <BtnGroup w={280} items={['tri', 'pent', 'para', 'spline', 'trap', 'arrow', 'arrows']} />
          </Stack>
        </Section>
        <Section $pl={9} $pr={10}>
          <Stack>
            <BtnGroup w={160} items={['dash1', 'dash2', 'fillet', 'tangent']} />
            <BtnGroup w={160} items={['c3p', 'c2p', 'hatch', 'fill']} />
          </Stack>
        </Section>
        <Section $pl={9} $pr={6} $gap={11}>
          <Big $w={40}>
            <BigIcon $w={40} viewBox="0 0 40 40">
              <path d="M9 13V40M32 13V40" stroke="#45494f" strokeWidth="1.2" />
              <path d="M9 22H32" stroke="#0d62ad" strokeWidth="1.3" /><path d="M9 22L14 19V25ZM32 22L27 19V25Z" fill="#0d62ad" />
              <path d="M20.5 29V33M13 33L17 35M28 33L24 35M13 39H18M23 39H28M15 36L19 38M26 36L22 38" stroke="#f28a12" strokeWidth="1.5" />
            </BigIcon>
            <BigLabel>标注</BigLabel>
            <Caret />
          </Big>
          <Stack>
            <BtnGroup w={120} items={['dimAligned', 'dimAngle', 'dimCont']} />
            <BtnGroup w={120} items={['xy', 'dimRadius', 'dimGear']} />
          </Stack>
        </Section>
        <Section $pl={8} $pr={8} $gap={11}>
          <Big $w={40}>
            <BigIcon $w={40} viewBox="0 0 40 40"><text x="20" y="37" textAnchor="middle" fontFamily="Liberation Sans" fontWeight="700" fontSize="33" fill="#3a3f4a">A</text></BigIcon>
            <BigLabel>文字</BigLabel>
            <Caret />
          </Big>
          <TextCol>
            <SelectBox $w={142} $h={36} $pl={33} $size={17}>
              <FontGlyph viewBox="0 0 14 14"><path d="M1 10L4 3H6L9 10M3 8H7M7 2H12V5M9 2V8H11" fill="none" stroke="#111" strokeWidth="1" /></FontGlyph>
              国标长...
              <SelectChevron size={16} strokeWidth={1.2} $r={5} />
            </SelectBox>
            <Row>
              <SelectBox $w={75} $h={30} $pl={4} $size={18}>350<SelectChevron size={16} strokeWidth={1.2} $r={5} /></SelectBox>
              <Group $w={68}>
                <Cell><StyleLetter>B</StyleLetter></Cell>
                <Cell><StyleLetter $italic>I</StyleLetter></Cell>
              </Group>
            </Row>
          </TextCol>
        </Section>
        <Section $pl={12} $pr={10} $gap={13}>
          <Big $w={36}>
            <BigIcon $w={36} viewBox="0 0 36 40">
              <path d="M5 32L22 14Q25 11 28 14L30 16Q32 19 29 22L14 37H7Z" fill="#cfe5f6" stroke="#6aaee0" strokeWidth="1.2" />
              <path d="M3 37.5H24" stroke="#2a86d6" strokeWidth="1.1" />
            </BigIcon>
            <BigLabel $size={17} $mt={5} $color="#111">删除</BigLabel>
          </Big>
          <Stack>
            <BtnGroup w={80} items={['copy', 'cut']} />
            <BtnGroup w={80} items={['paste', 'brush']} />
          </Stack>
        </Section>
        <Section $pl={9} $pr={12}>
          <Stack>
            <BtnGroup w={160} items={['move', 'scale', 'rotate', 'cube']} />
            <BtnGroup w={160} items={['trim', 'offset', 'mirror', 'array']} />
          </Stack>
        </Section>
        <Section $pl={8} $pr={10} $gap={10}>
          <Big $w={40}>
            <BigIcon $w={40} viewBox="0 0 40 40">
              <path d="M6 25H32M6 22V28M32 22V28" stroke="#45494f" strokeWidth="1.2" />
              <rect x="6.5" y="30" width="25.5" height="6" fill="#f1b70e" stroke="#7a5c00" />
              <path d="M10 31V35M14 31V35M18 31V35M22 31V35M26 31V35M30 31V35" stroke="#7a5c00" />
            </BigIcon>
            <BigLabel>测量</BigLabel>
            <Caret />
          </Big>
          <Stack>
            <BtnGroup w={80} items={['slope', 'pencil']} />
            <BtnGroup w={80} items={['image', 'table']} />
          </Stack>
        </Section>
        <Section $pl={9} $pr={0} $last>
          <Big $w={40}>
            <BigIcon $w={40} viewBox="0 0 40 40"><rect x="0.5" y="7" width="36" height="36" rx="2" fill="#f1f1f1" stroke="#b2b2b2" /></BigIcon>
            <BigLabel $size={18} $mt={5} $color="#111">图层</BigLabel>
          </Big>
        </Section>
      </Ribbon>
      <Canvas>
        <CadSvg viewBox="0 168 1414 1128">
          {SHEETS.map(([ox, oy, items], n) => <Cad key={n} ox={ox} oy={oy} items={items} />)}
        </CadSvg>
        <BigNote>十里长廊光伏，柱距5m</BigNote>
        <Notes>
          <NoteLabel>方钢管</NoteLabel><NoteColon>:</NoteColon><NoteValue>3.01 kg/m</NoteValue>
          <NoteLabel>{'组件　'}</NoteLabel><NoteColon>:</NoteColon><NoteValue>{'5.0  kg/m'}<sup>2</sup></NoteValue>
          <NoteLabel>中间钢梁线荷载</NoteLabel><NoteColon>:</NoteColon><NoteValue>3.1X1.2/0.45+5.0X1.2= 14.3kg/m</NoteValue>
          <NoteLabel>取</NoteLabel><NoteColon /><NoteValue>0.15kN/m</NoteValue>
        </Notes>
      </Canvas>
    </Page>
  );
}
